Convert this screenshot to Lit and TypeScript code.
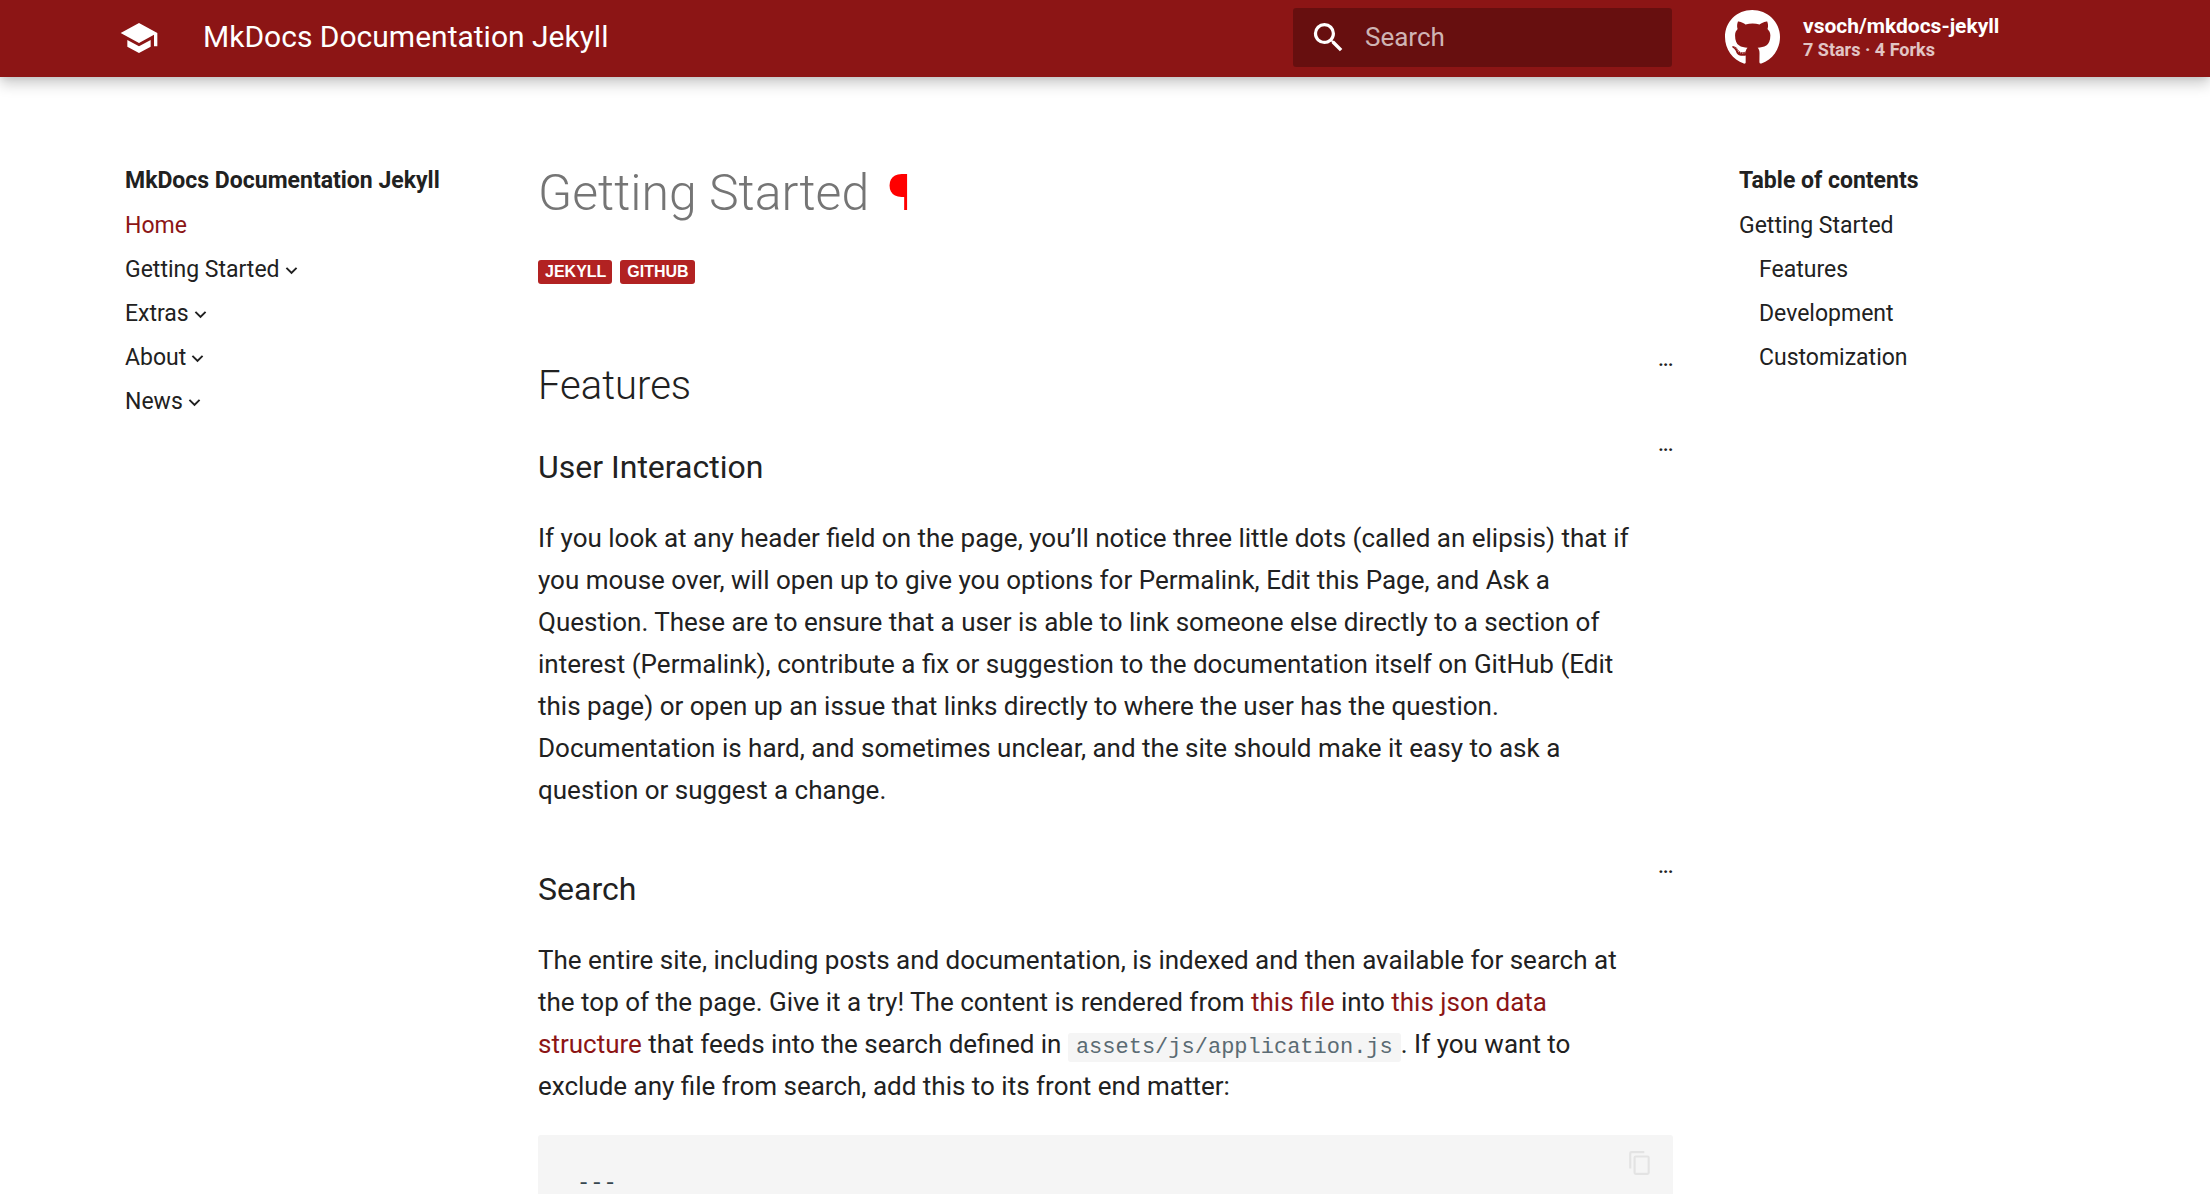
import { LitElement, html, css, svg } from "lit";
import { customElement } from "lit/decorators.js";

const HAT = svg`<path d="M5 13.18v4L12 21l7-3.82v-4L12 17l-7-3.82zM12 3 1 9l11 6 9-4.91V17h2V9L12 3z"/>`;
const MAGNIFY = svg`<path d="M9.5 3A6.5 6.5 0 0 1 16 9.5c0 1.61-.59 3.09-1.56 4.23l.27.27h.79l5 5-1.5 1.5-5-5v-.79l-.27-.27A6.516 6.516 0 0 1 9.5 16 6.5 6.5 0 0 1 3 9.5 6.5 6.5 0 0 1 9.5 3m0 2C7 5 5 7 5 9.5S7 14 9.5 14 14 12 14 9.5 12 5 9.5 5z"/>`;
const CHEVRON = svg`<path d="M7.41 8.59 12 13.17l4.59-4.58L18 10l-6 6-6-6z"/>`;
const COPY = svg`<path d="M19 21H8V7h11m0-2H8a2 2 0 0 0-2 2v14a2 2 0 0 0 2 2h11a2 2 0 0 0 2-2V7a2 2 0 0 0-2-2m-3-4H4a2 2 0 0 0-2 2v14h2V3h12V1z"/>`;
const GITHUB = svg`<path d="M165.9 397.4c0 2-2.3 3.6-5.2 3.6-3.3.3-5.6-1.3-5.6-3.6 0-2 2.3-3.6 5.2-3.6 3-.3 5.6 1.3 5.6 3.6zm-31.1-4.5c-.7 2 1.3 4.3 4.3 4.9 2.6 1 5.6 0 6.2-2s-1.3-4.3-4.3-5.2c-2.6-.7-5.5.3-6.2 2.3zm44.2-1.7c-2.9.7-4.9 2.6-4.6 4.9.3 2 2.9 3.3 5.9 2.6 2.9-.7 4.9-2.6 4.6-4.6-.3-1.9-3-3.2-5.9-2.9zM244.8 8C106.1 8 0 113.3 0 252c0 110.9 69.8 205.8 169.5 239.2 12.8 2.3 17.3-5.6 17.3-12.1 0-6.2-.3-40.4-.3-61.4 0 0-70 15-84.7-29.8 0 0-11.4-29.1-27.8-36.6 0 0-22.9-15.7 1.6-15.4 0 0 24.9 2 38.6 25.8 21.9 38.6 58.6 27.5 72.9 20.9 2.3-16 8.8-27.1 16-33.7-55.9-6.2-112.3-14.3-112.3-110.5 0-27.5 7.6-41.3 23.6-58.9-2.6-6.5-11.1-33.3 2.6-67.9 20.9-6.5 69 27 69 27 20-5.6 41.5-8.5 62.8-8.5s42.8 2.9 62.8 8.5c0 0 48.1-33.6 69-27 13.7 34.7 5.2 61.4 2.6 67.9 16 17.7 25.8 31.5 25.8 58.9 0 96.5-58.9 104.2-114.8 110.5 9.2 7.9 17 22.9 17 46.4 0 33.7-.3 75.4-.3 83.6 0 6.5 4.6 14.4 17.3 12.1C428.2 457.8 496 362.9 496 252 496 113.3 383.5 8 244.8 8zM97.2 352.9c-1.3 1-1 3.3.7 5.2 1.6 1.6 3.9 2.3 5.2 1 1.3-1 1-3.3-.7-5.2-1.6-1.6-3.9-2.3-5.2-1zm-10.8-8.1c-.7 1.3.3 2.9 2.3 3.9 1.6 1 3.6.7 4.3-.7.7-1.3-.3-2.9-2.3-3.9-2-.6-3.6-.3-4.3.7zm32.4 35.6c-1.6 1.3-1 4.3 1.3 6.2 2.3 2.3 5.2 2.6 6.5 1 1.3-1.3.7-4.3-1.3-6.2-2.2-2.3-5.2-2.6-6.5-1zm-11.4-14.7c-1.6 1-1.6 3.6 0 5.9 1.6 2.3 4.3 3.3 5.6 2.3 1.6-1.3 1.6-3.9 0-6.2-1.4-2.3-4-3.3-5.6-2z"/>`;

const icon = (cls: string, shape: unknown, box = "0 0 24 24") =>
  html`<svg class="icon ${cls}" viewBox=${box} aria-hidden="true">${shape}</svg>`;

interface NavItem {
  label: string;
  active?: boolean;
  nested?: boolean;
}

const NAV: NavItem[] = [
  { label: "Home", active: true },
  { label: "Getting Started", nested: true },
  { label: "Extras", nested: true },
  { label: "About", nested: true },
  { label: "News", nested: true },
];

const SECTIONS = ["Features", "Development", "Customization"];
const TAGS = ["jekyll", "github"];

@customElement("app-root")
export class AppRoot extends LitElement {
  static styles = css`
    :host {
      display: flex;
      flex-direction: column;
      min-height: 100vh;
      background: #fff;
      color: #212121;
      font-family: Roboto, "Liberation Sans", sans-serif;
      font-size: 26px;
      line-height: 42px;
    }
    * {
      box-sizing: border-box;
    }
    h1, h2, h3, p, ul, pre {
      margin: 0;
      padding: 0;
      font-weight: 400;
    }
    ul {
      list-style: none;
    }
    a {
      color: #8c1515;
      text-decoration: none;
    }
    button {
      border: 0;
      padding: 0;
      background: none;
      color: inherit;
      font: inherit;
      cursor: pointer;
    }
    .icon {
      display: block;
      flex: none;
      fill: currentColor;
    }

    .header {
      background: #8c1515;
      color: #fff;
      box-shadow: 0 0 7px rgba(0, 0, 0, 0.1), 0 7px 13px rgba(0, 0, 0, 0.2);
    }
    .bar {
      display: flex;
      align-items: center;
      width: 100%;
      max-width: 2008px;
      min-height: 77px;
      margin: 0 auto;
      padding: 0 6px 2px 18px;
    }
    .logo {
      color: inherit;
    }
    .hat {
      width: 40px;
      height: 40px;
    }
    .site {
      flex: 1;
      padding: 0 0 2px 44px;
      font-size: 30px;
    }
    .search {
      display: flex;
      align-items: center;
      gap: 17px;
      width: 379px;
      height: 59px;
      padding: 0 16px;
      border-radius: 3px;
      background: rgba(0, 0, 0, 0.26);
    }
    .magnify {
      width: 39px;
      height: 39px;
    }
    .query {
      flex: 1;
      min-width: 0;
      border: 0;
      padding: 0 0 2px;
      background: none;
      color: #fff;
      font: inherit;
      outline: 0;
    }
    .query::placeholder {
      color: rgba(255, 255, 255, 0.7);
      opacity: 1;
    }
    .source {
      display: flex;
      align-items: center;
      gap: 23px;
      width: 378px;
      margin-left: 53px;
      color: inherit;
      font-weight: 700;
    }
    .octocat {
      width: 55px;
      height: 57px;
    }
    .repo {
      display: block;
      font-size: 21px;
      line-height: 24px;
    }
    .facts {
      display: block;
      font-size: 18px;
      line-height: 23px;
      opacity: 0.75;
    }

    .main {
      flex: 1;
      display: grid;
      grid-template-columns: 398px minmax(0, 1fr) 398px;
      width: 100%;
      max-width: 2008px;
      margin: 0 auto;
    }
    .side {
      padding: 89px 24px 0;
      font-size: 23px;
      line-height: 30px;
    }
    .side.toc {
      padding-left: 28px;
    }
    .side-title {
      margin-bottom: 15px;
      font-size: 23px;
      font-weight: 700;
    }
    .links {
      display: grid;
      gap: 14px;
    }
    .links .links {
      padding: 14px 0 0 20px;
    }
    .link {
      display: flex;
      align-items: center;
      width: fit-content;
      color: #212121;
    }
    .link.active {
      color: #8c1515;
    }
    .chevron {
      width: 23px;
      height: 23px;
    }

    .content {
      display: flex;
      flex-direction: column;
      padding: 84px 38px 0 39px;
    }
    .h1 {
      color: #757575;
      font-size: 50px;
      font-weight: 300;
      line-height: 64px;
    }
    .pilcrow {
      margin-left: 6px;
      color: #f00;
    }
    .tags {
      display: flex;
      gap: 8px;
      margin: 35px 0 73px;
    }
    .tag {
      padding: 0 6px 0 7px;
      border-radius: 3px;
      background: #b22222;
      color: #fff;
      font: 700 16px/24px "Liberation Sans", Arial, sans-serif;
      text-transform: uppercase;
    }
    .heading {
      display: flex;
      align-items: flex-start;
      justify-content: space-between;
    }
    .h2 {
      font-size: 40px;
      font-weight: 300;
      line-height: 58px;
      margin-bottom: 27px;
    }
    .h3 {
      font-size: 32px;
      line-height: 50px;
      margin-bottom: 25px;
    }
    .more {
      font-size: 16px;
      font-weight: 900;
      line-height: 8px;
    }
    .text {
      padding-right: 24px;
    }
    .text + .heading {
      margin-top: 53px;
    }
    .code {
      padding: 2px 8px;
      border-radius: 3px;
      background: #f5f5f5;
      color: #5b6b73;
      font: 22px "Liberation Mono", monospace;
    }
    .block {
      flex: 1;
      display: flex;
      align-items: flex-start;
      justify-content: space-between;
      margin-top: 28px;
      padding: 0 20px 0 39px;
      border-radius: 3px 3px 0 0;
      background: #f5f5f5;
    }
    .pre {
      padding-top: 39px;
      color: #37474f;
      font: 22px/20px "Liberation Mono", monospace;
    }
    .copy {
      margin-top: 15px;
      color: rgba(0, 0, 0, 0.07);
    }
    .sheets {
      width: 26px;
      height: 26px;
    }
  `;

  private more(label: string) {
    return html`<button class="more" type="button" aria-label="Options for ${label}">...</button>`;
  }

  render() {
    return html`
      <header class="header">
        <div class="bar">
          <a class="logo" href="#home" aria-label="MkDocs Documentation Jekyll">${icon("hat", HAT)}</a>
          <span class="site">MkDocs Documentation Jekyll</span>
          <label class="search">
            ${icon("magnify", MAGNIFY)}
            <input class="query" type="text" aria-label="Search" placeholder="Search" />
          </label>
          <a class="source" href="#repository">
            ${icon("octocat", GITHUB, "0 0 496 512")}
            <span>
              <span class="repo">vsoch/mkdocs-jekyll</span>
              <span class="facts">7 Stars · 4 Forks</span>
            </span>
          </a>
        </div>
      </header>
      <div class="main">
        <nav class="side" aria-label="Site">
          <h2 class="side-title">MkDocs Documentation Jekyll</h2>
          <ul class="links">
            ${NAV.map(
              (item) => html`<li>
                ${item.nested
                  ? html`<button class="link" type="button">${item.label}${icon("chevron", CHEVRON)}</button>`
                  : html`<a class="link ${item.active ? "active" : ""}" href="#home">${item.label}</a>`}
              </li>`
            )}
          </ul>
        </nav>
        <main class="content">
          <h1 class="h1">Getting Started <a class="pilcrow" href="#getting-started">¶</a></h1>
          <div class="tags">${TAGS.map((tag) => html`<span class="tag">${tag}</span>`)}</div>
          <div class="heading">
            <h2 class="h2" id="features">Features</h2>
            ${this.more("Features")}
          </div>
          <div class="heading">
            <h3 class="h3">User Interaction</h3>
            ${this.more("User Interaction")}
          </div>
          <p class="text">
            If you look at any header field on the page, you’ll notice three little dots (called an elipsis) that if
            you mouse over, will open up to give you options for Permalink, Edit this Page, and Ask a Question. These
            are to ensure that a user is able to link someone else directly to a section of interest (Permalink),
            contribute a fix or suggestion to the documentation itself on GitHub (Edit this page) or open up an issue
            that links directly to where the user has the question. Documentation is hard, and sometimes unclear, and
            the site should make it easy to ask a question or suggest a change.
          </p>
          <div class="heading">
            <h3 class="h3">Search</h3>
            ${this.more("Search")}
          </div>
          <p class="text">
            The entire site, including posts and documentation, is indexed and then available for search at the top of
            the page. Give it a try! The content is rendered from <a href="#file">this file</a> into
            <a href="#data">this json data structure</a> that feeds into the search defined in
            <code class="code">assets/js/application.js</code>. If you want to exclude any file from search, add this
            to its front end matter:
          </p>
          <div class="block">
            <pre class="pre">---</pre>
            <button class="copy" type="button" aria-label="Copy to clipboard">${icon("sheets", COPY)}</button>
          </div>
        </main>
        <nav class="side toc" aria-label="Table of contents">
          <h2 class="side-title">Table of contents</h2>
          <ul class="links">
            <li>
              <a class="link" href="#getting-started">Getting Started</a>
              <ul class="links">
                ${SECTIONS.map((name) => html`<li><a class="link" href="#${name.toLowerCase()}">${name}</a></li>`)}
              </ul>
            </li>
          </ul>
        </nav>
      </div>
    `;
  }
}
